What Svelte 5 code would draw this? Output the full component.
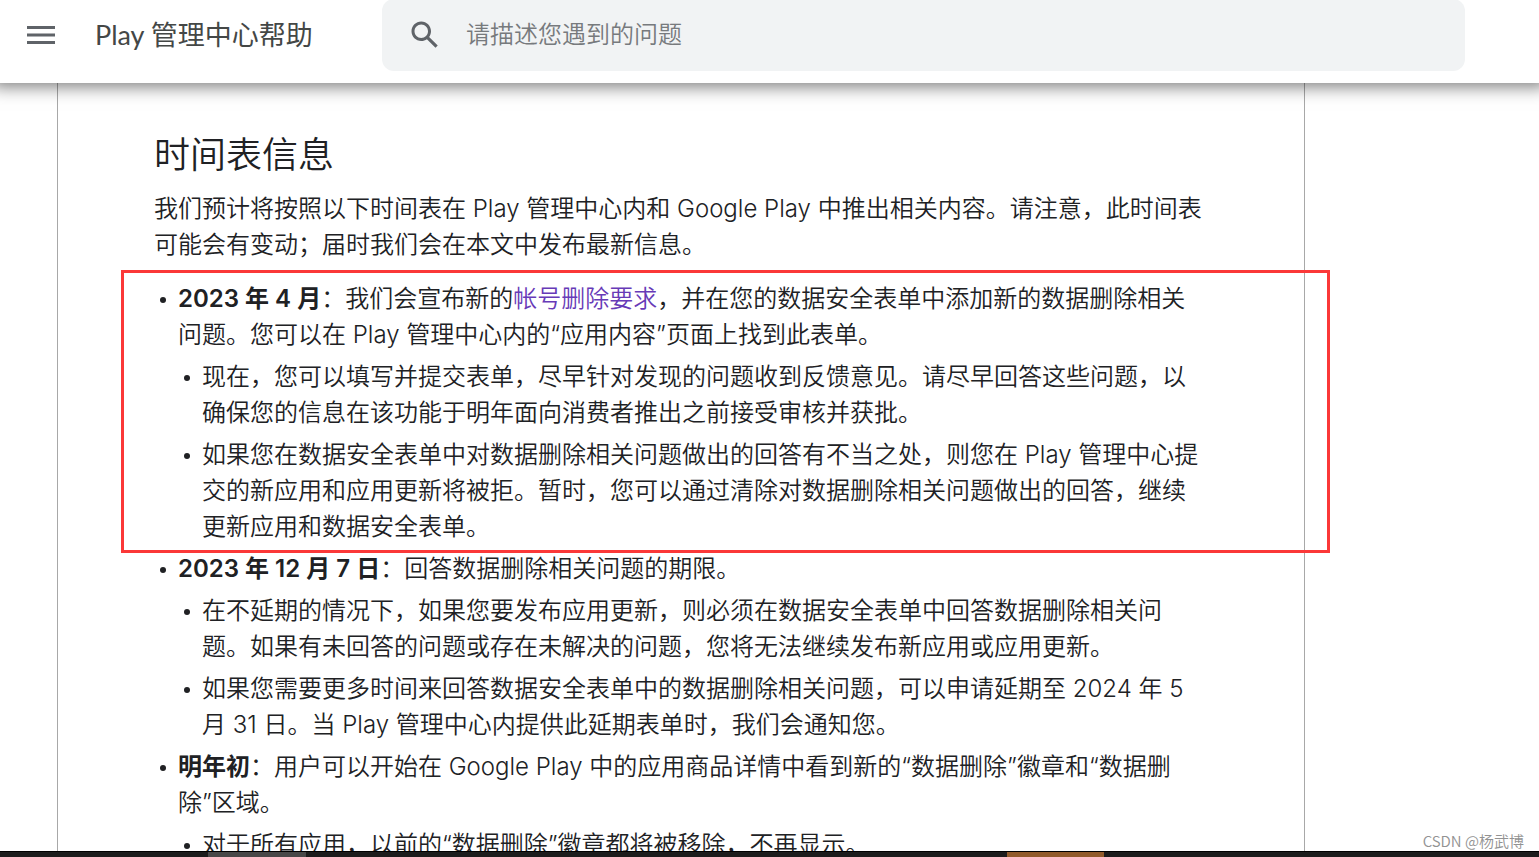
<script>
  const timeline = [
    {
      date: '2023 年 4 月',
      before: '：我们会宣布新的',
      link: '帐号删除要求',
      after: '，并在您的数据安全表单中添加新的数据删除相关问题。您可以在 Play 管理中心内的“应用内容”页面上找到此表单。',
      marked: true,
      notes: [
        '现在，您可以填写并提交表单，尽早针对发现的问题收到反馈意见。请尽早回答这些问题，以确保您的信息在该功能于明年面向消费者推出之前接受审核并获批。',
        '如果您在数据安全表单中对数据删除相关问题做出的回答有不当之处，则您在 Play 管理中心提交的新应用和应用更新将被拒。暂时，您可以通过清除对数据删除相关问题做出的回答，继续更新应用和数据安全表单。'
      ]
    },
    {
      date: '2023 年 12 月 7 日',
      before: '：回答数据删除相关问题的期限。',
      notes: [
        '在不延期的情况下，如果您要发布应用更新，则必须在数据安全表单中回答数据删除相关问题。如果有未回答的问题或存在未解决的问题，您将无法继续发布新应用或应用更新。',
        '如果您需要更多时间来回答数据安全表单中的数据删除相关问题，可以申请延期至 2024 年 5 月 31 日。当 Play 管理中心内提供此延期表单时，我们会通知您。'
      ]
    },
    {
      date: '明年初',
      before: '：用户可以开始在 Google Play 中的应用商品详情中看到新的“数据删除”徽章和“数据删除”区域。',
      notes: ['对于所有应用，以前的“数据删除”徽章都将被移除，不再显示。']
    }
  ];
</script>

<div class="page">
  <header>
    <button class="menu" aria-label="菜单">
      <svg width="28" height="18" viewBox="0 0 28 18"><path d="M0 0h28v3H0zM0 7.5h28v3H0zM0 15h28v3H0z" fill="#5f6368" /></svg>
    </button>
    <a class="brand" href="#top">Play 管理中心帮助</a>
    <form class="search" role="search">
      <button type="button" aria-label="搜索">
        <svg width="36" height="36" viewBox="0 0 24 24"><path fill="#5f6368" d="M20.49 19l-5.73-5.73C15.53 12.2 16 10.91 16 9.5 16 5.91 13.09 3 9.5 3S3 5.91 3 9.5 5.91 16 9.5 16c1.41 0 2.7-.47 3.77-1.24L19 20.49 20.49 19zM5 9.5C5 7.01 7.01 5 9.5 5S14 7.01 14 9.5 11.99 14 9.5 14 5 11.99 5 9.5z" /></svg>
      </button>
      <input type="text" aria-label="搜索帮助" placeholder="请描述您遇到的问题" />
    </form>
  </header>

  <main>
    <article>
      <h2>时间表信息</h2>
      <p>我们预计将按照以下时间表在 Play 管理中心内和 Google Play 中推出相关内容。请注意，此时间表可能会有变动；届时我们会在本文中发布最新信息。</p>
      <ul>
        {#each timeline as item}
          <li class:marked={item.marked}>
            <b>{item.date}</b>{item.before}{#if item.link}<a href="#deletion">{item.link}</a>{item.after}{/if}
            <ul>
              {#each item.notes as note}
                <li>{note}</li>
              {/each}
            </ul>
          </li>
        {/each}
      </ul>
    </article>
    <span class="credit">CSDN @杨武博</span>
  </main>

  <footer><i class="grey"></i><i class="orange"></i></footer>
</div>

<style>
  :global(body) {
    background: #fff;
  }
  .page {
    display: flex;
    flex-direction: column;
    height: 100vh;
    overflow: hidden;
    font-family: Inter, 'Noto Sans CJK SC', sans-serif;
    font-size: 24px;
    font-weight: 350;
    line-height: 36px;
    color: #202124;
  }
  header {
    position: relative;
    z-index: 1;
    flex: none;
    display: flex;
    align-items: center;
    box-sizing: border-box;
    height: 83px;
    padding: 0 74px 13px 27px;
    background: #fff;
    box-shadow: 0 -4px 16px 8px rgba(0, 0, 0, 0.5);
  }
  button {
    display: flex;
    padding: 0;
    border: 0;
    background: none;
  }
  .brand {
    flex: none;
    width: 287px;
    margin-left: 40px;
    font-family: Lato, 'Noto Sans CJK SC', sans-serif;
    font-size: 27px;
    font-weight: 400;
    color: #444746;
    text-decoration: none;
  }
  .search {
    flex: 1;
    display: flex;
    align-items: center;
    gap: 23px;
    height: 72px;
    padding: 0 25px;
    border-radius: 12px;
    background: #f1f3f4;
  }
  input {
    flex: 1;
    min-width: 0;
    padding: 0;
    border: 0;
    outline: 0;
    background: none;
    font: inherit;
  }
  input::placeholder {
    color: #777a7d;
    opacity: 1;
  }
  main {
    position: relative;
    flex: 1;
    min-height: 0;
  }
  article {
    box-sizing: border-box;
    height: 100%;
    margin: 0 234px 0 57px;
    padding: 48px 102px 0 96px;
    border: solid #a8a8a8;
    border-width: 0 1px;
  }
  h2 {
    margin: 0 0 12px;
    font-size: 36px;
    font-weight: 350;
    line-height: 48px;
  }
  p {
    margin: 0 0 18px;
  }
  ul {
    margin: 0;
    padding: 0 0 0 24px;
    list-style: none;
  }
  ul ul {
    padding-top: 6px;
  }
  li {
    position: relative;
  }
  li + li {
    margin-top: 6px;
  }
  li::before {
    content: '';
    position: absolute;
    top: 16px;
    left: -18px;
    width: 6px;
    height: 6px;
    border-radius: 50%;
    background: #202124;
  }
  .marked::after {
    content: '';
    position: absolute;
    inset: -11px -128px -8px -57px;
    border: 3px solid #fb3838;
    pointer-events: none;
  }
  b {
    font-weight: 600;
  }
  li a {
    color: #673ab7;
    text-decoration: none;
  }
  .credit {
    position: absolute;
    right: 15px;
    bottom: 0;
    font-family: 'Noto Sans CJK SC', sans-serif;
    font-size: 15px;
    line-height: 20px;
    color: #929292;
  }
  footer {
    position: relative;
    z-index: 1;
    flex: none;
    display: grid;
    grid-template-columns: 208fr 98fr 701fr 97fr 435fr;
    height: 5px;
    border-top: 1px solid #000;
    background: #1c1c1c;
  }
  .grey {
    grid-column: 2;
    background: #484848;
  }
  .orange {
    grid-column: 4;
    background: #925b2b;
  }
</style>
